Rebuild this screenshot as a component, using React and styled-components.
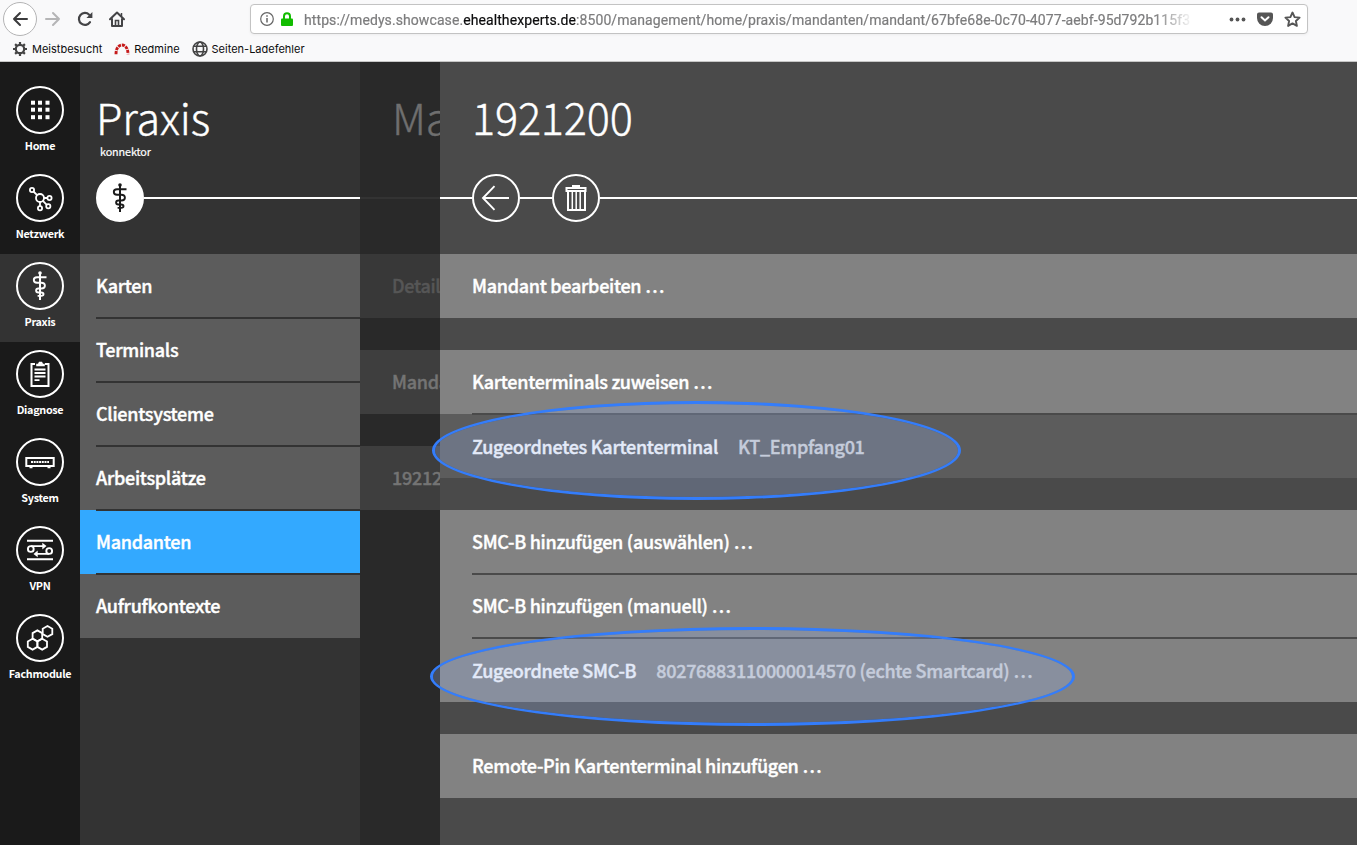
import React from "react";
import styled, { createGlobalStyle } from "styled-components";

const Global = createGlobalStyle`
  * { box-sizing: border-box; }
  body { margin: 0; background: #4a4a4a; font-family: "Noto Sans CJK SC", "Open Sans", sans-serif; color: #fff; }
`;

const Page = styled.div`
  width: 1357px;
  height: 845px;
  display: flex;
  flex-direction: column;
  overflow: hidden;
`;

/* Browser chrome */
const Chrome = styled.header`
  height: 62px;
  flex: none;
  display: flex;
  flex-direction: column;
  background: #f9f9fa;
  border-bottom: 1px solid #c6c6c6;
  color: #0c0c0d;
  font-family: Inter, Roboto, sans-serif;
`;
const Toolbar = styled.div`
  height: 38px;
  display: flex;
  align-items: center;
  padding-left: 3px;
`;
const BackButton = styled.span`
  width: 34px;
  height: 34px;
  border: 1px solid #b4b4b5;
  border-radius: 50%;
  background: #fff;
  display: flex;
  align-items: center;
  justify-content: center;
`;
const ToolIcon = styled.span`
  width: 32px;
  display: flex;
  justify-content: center;
`;
const UrlBar = styled.div`
  margin-left: 117px;
  width: 1058px;
  height: 30px;
  display: flex;
  align-items: center;
  padding: 0 6px 0 9px;
  border: 1px solid #c3c3c3;
  border-radius: 4px;
  background: #fff;
  box-shadow: 0 1px 3px rgba(0, 0, 0, 0.05);
`;
const LockIcon = styled.span`
  display: flex;
  margin-left: 6px;
`;
const UrlText = styled.div`
  margin-left: 10px;
  padding-top: 1px;
  width: 890px;
  overflow: hidden;
  white-space: nowrap;
  font: 14px/20px Roboto, sans-serif;
  letter-spacing: 0.085px;
  color: #7c7c7d;
  -webkit-text-stroke: 0.2px currentColor;
  mask-image: linear-gradient(to right, #000 850px, transparent 890px);
  b { font-weight: 400; color: #0c0c0d; }
`;
const UrlActions = styled.div`
  margin-left: auto;
  display: flex;
  align-items: center;
  gap: 11px;
`;
const Bookmarks = styled.div`
  height: 22px;
  display: flex;
  align-items: center;
  padding-left: 12px;
  gap: 12px;
  font-size: 11px;
`;
const Bookmark = styled.span`
  display: flex;
  align-items: center;
  gap: 4px;
  white-space: nowrap;
`;

/* Application */
const Body = styled.div`
  flex: 1;
  display: flex;
  min-height: 0;
`;
const Sidebar = styled.nav`
  width: 80px;
  flex: none;
  padding-top: 16px;
  background: #1a1a1a;
`;
const NavItem = styled.div`
  height: 88px;
  padding-top: 8px;
  display: flex;
  flex-direction: column;
  align-items: center;
  background: ${(p) => (p.$active ? "#333" : "transparent")};
`;
const Circle = styled.span`
  width: 48px;
  height: 48px;
  flex: none;
  border: 2px solid #fff;
  border-radius: 50%;
  display: flex;
  align-items: center;
  justify-content: center;
  color: ${(p) => (p.$filled ? "#1a1a1a" : "#fff")};
  background: ${(p) => (p.$filled ? "#fff" : "transparent")};
  svg { flex: none; }
`;
const NavLabel = styled.span`
  margin-top: 3px;
  font-size: 10.8px;
  font-weight: 700;
  letter-spacing: -0.3px;
  line-height: 16px;
  white-space: nowrap;
`;

const Column = styled.section`
  width: ${(p) => p.$width};
  flex: ${(p) => (p.$grow ? "1" : "none")};
  overflow: hidden;
  background: ${(p) => p.$bg};
`;
const Head = styled.div`
  height: 112px;
  padding: 26px 0 0 ${(p) => p.$indent};
  color: ${(p) => p.$color || "#fff"};
`;
const Title = styled.h1`
  margin: 0;
  font-size: 43.2px;
  font-weight: 300;
  line-height: 56px;
  letter-spacing: -0.15px;
  white-space: nowrap;
  -webkit-text-stroke: 0.4px currentColor;
`;
const Subtitle = styled.div`
  padding-left: 4px;
  margin-top: -1px;
  font-size: 10.8px;
  letter-spacing: -0.1px;
  line-height: 16px;
  -webkit-text-stroke: 0.2px currentColor;
`;
const ActionRail = styled.div`
  height: 48px;
  margin-bottom: 32px;
  display: flex;
  align-items: center;
`;
const Line = styled.span`
  height: 2px;
  width: ${(p) => p.$width || "auto"};
  flex: ${(p) => (p.$width ? "none" : "1")};
  background: ${(p) => p.$color || "#fff"};
`;
const Group = styled.div`
  margin-bottom: 32px;
`;
const Row = styled.div`
  position: relative;
  height: 64px;
  display: flex;
  align-items: center;
  padding-left: ${(p) => p.$indent};
  padding-bottom: ${(p) => (p.$drop ? "0" : "2px")};
  background: ${(p) => p.$bg};
  color: ${(p) => p.$color || "#fff"};
  font-size: 18px;
  font-weight: 500;
  letter-spacing: -0.29px;
  -webkit-text-stroke: 0.4px currentColor;
  white-space: nowrap;
  &:not(:first-child)::before {
    content: "";
    position: absolute;
    top: -1px;
    left: ${(p) => p.$indent};
    right: 0;
    height: 2px;
    background: ${(p) => p.$divider};
  }
`;
const Value = styled.span`
  margin-left: 20px;
  color: #d6d6d6;
`;
const Highlight = styled.div`
  position: absolute;
  left: ${(p) => p.$x}px;
  top: ${(p) => p.$y}px;
  width: ${(p) => p.$w}px;
  height: ${(p) => p.$h}px;
  border: 3px solid #347dfb;
  border-radius: 50%;
  background: rgba(154, 181, 235, 0.28);
  background-clip: padding-box;
`;

const Svg = ({ size = 32, w = 2, children, ...rest }) => (
  <svg width={size} height={size} viewBox={`0 0 ${size} ${size}`} fill="none" stroke="currentColor" strokeWidth={w} {...rest}>
    {children}
  </svg>
);

const HomeGrid = () => (
  <Svg stroke="none" fill="currentColor">
    {[7, 14, 21.5].map((y) => [7, 14, 21.5].map((x) => <rect key={x + "-" + y} x={x} y={y - 0.3} width="4" height="4" />))}
  </Svg>
);
const Network = () => (
  <Svg w={1.8}>
    <circle cx="16" cy="16" r="4" />
    <circle cx="8" cy="8" r="2.1" />
    <circle cx="25.5" cy="16" r="2.1" />
    <circle cx="24.3" cy="24.3" r="2.1" />
    <circle cx="16" cy="26.3" r="2.1" />
    <path d="M9.5 9.5l3.6 3.6M20 16h3.4M18.9 18.9l3.9 3.9M16 20v4.2" />
  </Svg>
);
const Staff = () => (
  <Svg w={1.9}>
    <path d="M16 3v27" strokeWidth="2" />
    <circle cx="16" cy="3" r="1.8" fill="currentColor" stroke="none" />
    <path d="M22.5 7.3H13c-2.2 0-3.2 1.2-3.2 2.8s1.1 2.7 3.2 2.7h4.2c2.4 0 3.7 1.2 3.7 3s-1.3 2.7-3.5 2.7h-3c-1.6 0-2.3.8-2.3 2s.8 2 2.2 2h2.8c1.6 0 2.4.6 2.4 1.6s-.8 1.8-2.3 1.8h-3.6" />
  </Svg>
);
const Clipboard = () => (
  <Svg>
    <path d="M11 6H7.500v22h17V6H21" />
    <path d="M12.2 8.3V5.700H14L15 3.800h3l1 1.900h1.800v2.600z" fill="currentColor" stroke="none" />
    <path d="M10.500 11.500h11M10.500 15h11M10.500 18.500h11M10.500 22.200h5" strokeWidth="1.8" />
  </Svg>
);
const Router = () => (
  <Svg>
    <path d="M2.3 12h27.4v8H2.3z" />
    <path d="M7 16h18" strokeDasharray="2 .7" strokeWidth="2" />
    <path d="M5.5 21.5h3M23.5 21.5h3" strokeWidth="1.4" />
  </Svg>
);
const Vpn = () => (
  <Svg w={1.9}>
    <path d="M3 6.7h26M3 25.2h26" />
    <circle cx="6.8" cy="15" r="2.9" />
    <circle cx="25.2" cy="17" r="2.9" />
    <path d="M7 12.1h13M25 19.9H12" />
    <path d="M18.3 8.7l4.2 3.4-4.2 3.4zM13.7 16.5l-4.2 3.4 4.2 3.4z" fill="currentColor" stroke="none" />
  </Svg>
);
const Hexes = () => (
  <Svg w={1.8}>
    {[[8.6, 22.2], [18.2, 22.2], [13.4, 13.8], [23.5, 9.4]].map(([x, y]) => (
      <path key={x} d={`M${x} ${y - 5.4}l4.8 2.7v5.4l-4.8 2.7l-4.8-2.7v-5.4z`} />
    ))}
  </Svg>
);
const ArrowBack = () => (
  <Svg>
    <path d="M29 16H3M14.5 4.2L3 16l11.5 11.8" strokeWidth="1.9" />
  </Svg>
);
const Trash = () => (
  <Svg>
    <path d="M6.5 6h19v3h-19zM13 5.5V4h6v1.5M8 9.5V28h17V9.5" />
    <path d="M12.3 10v17M16.2 10v17M20.2 10v17" strokeWidth="1.5" />
  </Svg>
);

const nav = [
  ["Home", HomeGrid],
  ["Netzwerk", Network],
  ["Praxis", Staff],
  ["Diagnose", Clipboard],
  ["System", Router],
  ["VPN", Vpn],
  ["Fachmodule", Hexes],
];
const menu = ["Karten", "Terminals", "Clientsysteme", "Arbeitsplätze", "Mandanten", "Aufrufkontexte"];

const BrowserChrome = () => (
  <Chrome>
    <Toolbar>
      <BackButton>
        <Svg size={16} stroke="#3b3b3d"><path d="M15 8H2M8 2L2 8l6 6" strokeLinecap="round" strokeLinejoin="round" /></Svg>
      </BackButton>
      <ToolIcon><Svg size={16} stroke="#b5b5b6"><path d="M1 8h13M8 2l6 6-6 6" strokeLinecap="round" strokeLinejoin="round" /></Svg></ToolIcon>
      <ToolIcon>
        <Svg size={16} stroke="#444446"><path d="M13 11.2A6 6 0 1 1 12.2 3.7" strokeWidth="2.2" strokeLinecap="round" /><path d="M15.4 1v6H9.4z" fill="#444446" stroke="none" /></Svg>
      </ToolIcon>
      <ToolIcon>
        <Svg size={16} stroke="#444446"><path d="M1 8.3l7-6.8 7 6.8M3 8v7h10V8" strokeLinecap="round" strokeLinejoin="round" /><path d="M6.5 15V9.5h3V15" strokeWidth="1.6" /><path d="M12.5 2v3" strokeWidth="1.5" /></Svg>
      </ToolIcon>
      <UrlBar>
        <Svg size={14} stroke="#666" w={1.2}><circle cx="7" cy="7" r="6.3" /><path d="M7 6v4.5M7 3.3v1.5" strokeWidth="1.5" /></Svg>
        <LockIcon>
          <Svg size={14} stroke="#12bc00"><path d="M4 7V4.2a3 3 0 0 1 6 0V7" /><rect x="1" y="6.5" width="12" height="7.5" rx="1" fill="#12bc00" stroke="none" /></Svg>
        </LockIcon>
        <UrlText>
          https://medys.showcase.<b>ehealthexperts.de</b>:8500/management/home/praxis/mandanten/mandant/67bfe68e-0c70-4077-aebf-95d792b115f3
        </UrlText>
        <UrlActions>
          <Svg size={17} stroke="none" fill="#555"><circle cx="2.5" cy="8.5" r="1.9" /><circle cx="8.5" cy="8.5" r="1.9" /><circle cx="14.5" cy="8.5" r="1.9" /></Svg>
          <Svg size={16} stroke="none" fill="#555"><path d="M2 1.5h12a2 2 0 0 1 2 2V7a8 8 0 0 1-16 0V3.5a2 2 0 0 1 2-2z" /><path d="M4.5 6.2L8 9.5l3.5-3.3" fill="none" stroke="#fff" strokeWidth="2" strokeLinecap="round" /></Svg>
          <Svg size={17} stroke="#555" w={1.9}><path d="M8.5 1.5l2.1 4.6 5 .5-3.7 3.4 1 4.9-4.4-2.5-4.4 2.5 1-4.9L1.4 6.6l5-.5z" strokeLinejoin="round" /></Svg>
        </UrlActions>
      </UrlBar>
    </Toolbar>
    <Bookmarks>
      <Bookmark>
        <Svg size={16} stroke="#444" w={2.2}><circle cx="8" cy="8" r="4.2" /><path d="M8 1v2.5M8 12.5V15M1 8h2.5M12.5 8H15M3.1 3.1l1.7 1.7M11.2 11.2l1.7 1.7M3.1 12.9l1.7-1.7M11.2 4.8l1.700-1.700" /></Svg>
        Meistbesucht
      </Bookmark>
      <Bookmark>
        <Svg size={16} stroke="#c61a1a" w={2.9}><path d="M2 13.2C2 7.500 4.500 4 8 4S14 7.500 14 13.200" strokeDasharray="3.100 .9" /></Svg>
        Redmine
      </Bookmark>
      <Bookmark>
        <Svg size={16} stroke="#444" w={1.6}><circle cx="8" cy="8" r="7" /><ellipse cx="8" cy="8" rx="3.5" ry="7" /><path d="M2 5.3h12M2 10.7h12" /></Svg>
        Seiten-Ladefehler
      </Bookmark>
    </Bookmarks>
  </Chrome>
);

export default function App() {
  const main = { $indent: "32px", $divider: "#4a4a4a", $bg: "#828282" };
  return (
    <Page>
      <Global />
      <BrowserChrome />
      <Body>
        <Sidebar>
          {nav.map(([label, Icon]) => (
            <NavItem key={label} $active={label === "Praxis"}>
              <Circle><Icon /></Circle>
              <NavLabel>{label}</NavLabel>
            </NavItem>
          ))}
        </Sidebar>
        <Column $width="280px" $bg="#333">
          <Head $indent="16px">
            <Title>Praxis</Title>
            <Subtitle>konnektor</Subtitle>
          </Head>
          <ActionRail>
            <Line $width="16px" $color="transparent" />
            <Circle $filled><Staff /></Circle>
            <Line />
          </ActionRail>
          <Group>
            {menu.map((m) => (
              <Row key={m} $indent="16px" $divider="#333" $bg={m === "Mandanten" ? "#33a9ff" : "#5c5c5c"}>{m}</Row>
            ))}
          </Group>
        </Column>
        <Column $width="80px" $bg="#292929">
          <Head $indent="32px" $color="#6f6f6f"><Title>Mandanten</Title></Head>
          <ActionRail><Line $color="#333" /></ActionRail>
          <Group><Row $indent="32px" $bg="#383838" $color="#565656">Details</Row></Group>
          <Group><Row $indent="32px" $bg="#3e3e3e" $color="#747474">Mandant</Row></Group>
          <Group><Row $indent="32px" $bg="#3e3e3e" $color="#747474">1921200</Row></Group>
        </Column>
        <Column $grow $width="auto" $bg="#4a4a4a">
          <Head $indent="32px"><Title>1921200</Title></Head>
          <ActionRail>
            <Line $width="32px" />
            <Circle><ArrowBack /></Circle>
            <Line $width="32px" />
            <Circle><Trash /></Circle>
            <Line />
          </ActionRail>
          <Group><Row {...main}>Mandant bearbeiten …</Row></Group>
          <Group>
            <Row {...main}>Kartenterminals zuweisen …</Row>
            <Row {...main} $bg="#5c5c5c" $drop>Zugeordnetes Kartenterminal<Value>KT_Empfang01</Value></Row>
          </Group>
          <Group>
            <Row {...main}>SMC-B hinzufügen (auswählen) …</Row>
            <Row {...main}>SMC-B hinzufügen (manuell) …</Row>
            <Row {...main} $drop>Zugeordnete SMC-B<Value>80276883110000014570 (echte Smartcard) …</Value></Row>
          </Group>
          <Group><Row {...main}>Remote-Pin Kartenterminal hinzufügen …</Row></Group>
        </Column>
      </Body>
      <Highlight $x={432} $y={401} $w={529} $h={99} />
      <Highlight $x={430} $y={627} $w={645} $h={99} />
    </Page>
  );
}
